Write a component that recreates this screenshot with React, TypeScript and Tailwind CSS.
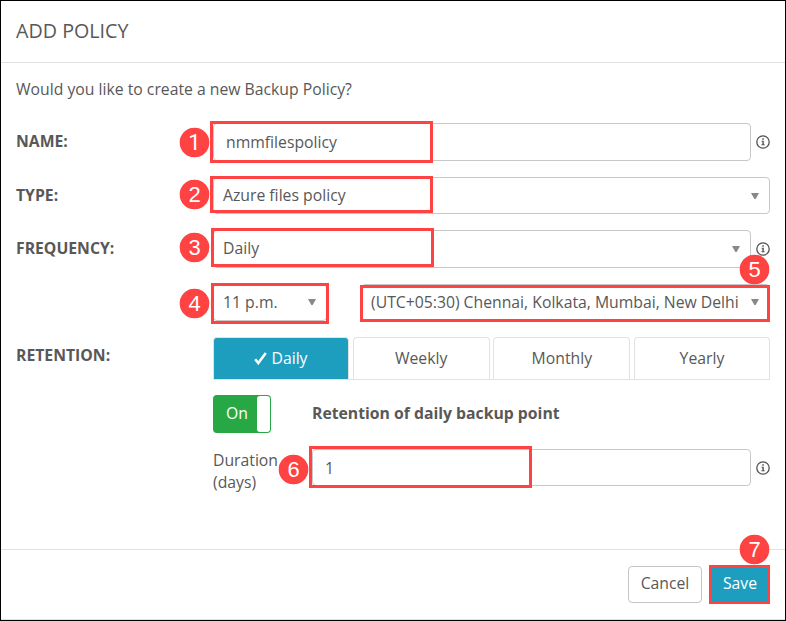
import React from 'react';

const Info = () => (
  <svg className="h-[14px] w-[14px] shrink-0" viewBox="0 0 14 14" fill="none">
    <circle cx="7" cy="7" r="6.2" stroke="#505050" strokeWidth="1.3" />
    <path d="M6.3 3.3h1.5v1.4H6.3zM5.6 5.8h2.2v3.5h.8v1H5.5v-1h.9V6.8h-.8z" fill="#505050" />
  </svg>
);

const Caret = () => (
  <svg className="h-[6px] w-[8px] shrink-0" viewBox="0 0 8 6">
    <path d="M0 0h8L4.6 6H3.4z" fill="#888" />
  </svg>
);

const Mark = ({ n, pos, digit = "font-['Liberation_Sans',Arial,sans-serif]" }: { n: number; pos: string; digit?: string }) => (
  <div className={`absolute flex h-[29px] w-[29px] items-center justify-center rounded-full bg-[#ff4242] text-[22px] leading-[29px] text-white shadow-[0_0_0_0.3px_#ff4242] ${digit} ${pos}`}>
    {n}
  </div>
);

const Outline = ({ pos }: { pos: string }) => (
  <div className={`pointer-events-none absolute border-3 border-[#ff4242] ${pos}`} />
);

const field = 'flex items-center rounded-[4px] border border-[#c8c8c8] bg-white';
const tab = 'flex h-[42px] items-center justify-center rounded-t-[4px] border border-b-0 border-[#e2e2e2] pb-px';

export default function App() {
  return (
    <div className="relative flex h-[621px] w-[786px] flex-col overflow-hidden border border-black bg-white font-['Open_Sans',sans-serif] text-[15.75px] leading-[22px] text-[#585858]">
      <header className="flex h-[62px] shrink-0 items-center border-b border-[#e2e2e2] pb-[2px] pl-[15px] text-[19.7px]">
        ADD POLICY
      </header>

      <main className="flex h-[486px] shrink-0 flex-col pl-[15px] pt-[15px]">
        <p className="h-[45px]">Would you like to create a new Backup Policy?</p>

        <div className="flex h-[38px] items-center">
          <label className="w-[197px] pb-[2px] font-bold">NAME:</label>
          <div className={`${field} h-[38px] w-[538px] pl-[12px]`}>nmmfilespolicy</div>
          <span className="ml-[5px]"><Info /></span>
        </div>

        <div className="mt-[16px] flex h-[37px] items-center">
          <label className="w-[197px] pb-[2px] font-bold">TYPE:</label>
          <div className={`${field} h-[37px] w-[557px] justify-between pl-[9px] pr-[10px]`}>
            <span className="pb-[2px]">Azure files policy</span>
            <Caret />
          </div>
        </div>

        <div className="mt-[16px] flex h-[38px] items-center">
          <label className="w-[197px] pb-[2px] font-bold">FREQUENCY:</label>
          <div className={`${field} h-[38px] w-[538px] justify-between pl-[9px] pr-[10px]`}>
            <span className="pb-[2px]">Daily</span>
            <Caret />
          </div>
          <span className="ml-[5px]"><Info /></span>
        </div>

        <div className="mt-[16px] flex h-[37px] pl-[197px]">
          <div className={`${field} h-[37px] w-[114px] justify-between pb-[2px] pl-[9px] pr-[10px]`}>
            11 p.m.
            <Caret />
          </div>
          <div className={`${field} ml-[34px] h-[37px] w-[409px] justify-between pb-[2px] pl-[9px] pr-[10px]`}>
            (UTC+05:30) Chennai, Kolkata, Mumbai, New Delhi
            <Caret />
          </div>
        </div>

        <div className="mt-[16px] flex h-[43px]">
          <label className="w-[197px] pt-[7px] font-bold">RETENTION:</label>
          <div className="grid w-[557px] grid-cols-[136px_137px_137px_136px] justify-between border-b border-[#e2e2e2]">
            <div className={`${tab} gap-[4px] bg-[#1d9ebf] text-white`}>
              <svg className="h-[13px] w-[13px]" viewBox="0 0 13 13" fill="none">
                <path d="M1.2 7.2l3.1 3.9L11.8 1" stroke="white" strokeWidth="2.5" />
              </svg>
              Daily
            </div>
            <div className={tab}>Weekly</div>
            <div className={tab}>Monthly</div>
            <div className={tab}>Yearly</div>
          </div>
        </div>

        <div className="mt-[15px] flex h-[38px] items-center pl-[197px]">
          <div className="flex h-[38px] w-[58px] items-center justify-between rounded-[4px] bg-[#28a745] p-px pl-[13px] text-white">
            <span className="pb-[2px]">On</span>
            <span className="h-[36px] w-[13px] rounded-[3px] bg-white" />
          </div>
          <span className="ml-[41px] pb-[2px] font-bold">Retention of daily backup point</span>
        </div>

        <div className="mt-[16px] flex h-[44px] pl-[197px]">
          <label className="w-[99px]">Duration<br />(days)</label>
          <div className={`${field} h-[37px] w-[439px] pl-[12px]`}>1</div>
          <span className="ml-[5px] mt-[12px]"><Info /></span>
        </div>
      </main>

      <footer className="flex h-[71px] shrink-0 justify-end border-b border-t border-[#e2e2e2] pr-[15px] pt-[16px]">
        <button className="h-[37px] w-[74px] rounded-[4px] border border-[#c4c4c4] pb-[4px]">Cancel</button>
        <button className="ml-[8px] h-[37px] w-[60px] bg-[#1d9ebf] pb-[4px] text-white">Save</button>
      </footer>

      <Outline pos="left-[209px] top-[120px] h-[42px] w-[223px]" />
      <Outline pos="left-[209px] top-[175px] h-[37px] w-[223px]" />
      <Outline pos="left-[210px] top-[227px] h-[39px] w-[223px]" />
      <Outline pos="left-[210px] top-[282px] h-[41px] w-[118px]" />
      <Outline pos="left-[359px] top-[284px] h-[37px] w-[410px]" />
      <Outline pos="left-[308px] top-[445px] h-[42px] w-[223px]" />
      <Outline pos="left-[708px] top-[564px] h-[39px] w-[61px]" />
      <Mark n={1} pos="left-[179px] top-[127px]" digit="font-['Roboto',sans-serif]" />
      <Mark n={2} pos="left-[179px] top-[179px]" />
      <Mark n={3} pos="left-[179px] top-[232px]" />
      <Mark n={4} pos="left-[179px] top-[288px]" />
      <Mark n={5} pos="left-[739px] top-[254px]" />
      <Mark n={6} pos="left-[278px] top-[454px]" />
      <Mark n={7} pos="left-[739px] top-[534px]" />
    </div>
  );
}
